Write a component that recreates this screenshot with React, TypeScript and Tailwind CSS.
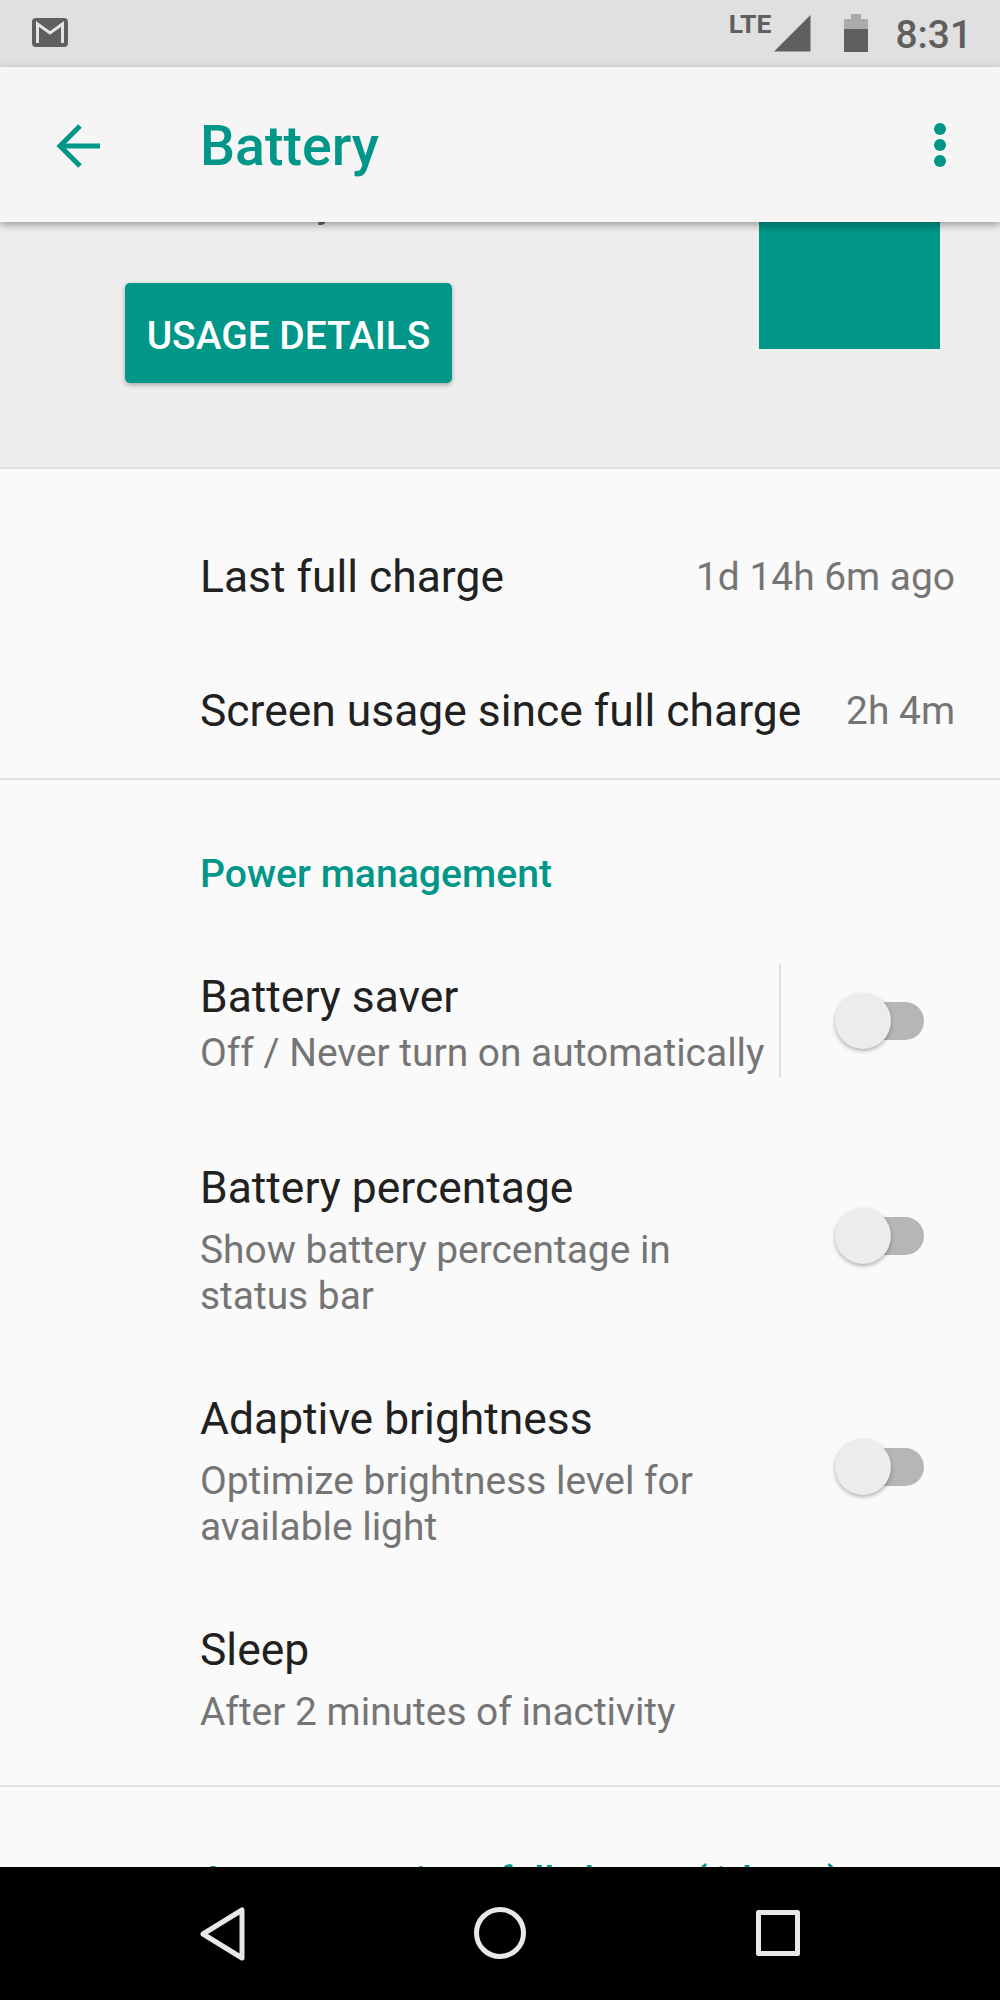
import React from "react";

function T({ className = "", children }: { className?: string; children: React.ReactNode }) {
  return <span className={`block whitespace-nowrap ${className}`}>{children}</span>;
}

function Switch({ className = "" }: { className?: string }) {
  return (
    <div className={`relative h-[56px] w-[89px] shrink-0 ${className}`}>
      <div className="absolute right-0 top-[9px] h-[38px] w-[80px] rounded-full bg-[#b6b6b6]" />
      <div className="absolute left-0 top-0 h-[56px] w-[56px] rounded-full bg-[#ececec] shadow-[0_2px_4px_rgba(0,0,0,0.3)]" />
    </div>
  );
}

function Pref({ title, lines, toggle = true, bottom = "pb-[35px]" }: { title: string; lines: string[]; toggle?: boolean; bottom?: string }) {
  return (
    <div className={`flex items-center pl-[200px] pr-[76px] pt-[35px] ${bottom}`}>
      <div className="flex-1">
        <T className="text-[44.4px] leading-[60px] text-[#212121]">{title}</T>
        <div className="mt-[9px]">
          {lines.map((l) => (
            <T key={l} className="text-[38.9px] leading-[46px] text-[#757575]">{l}</T>
          ))}
        </div>
      </div>
      {toggle && <Switch className="mt-[-5px]" />}
    </div>
  );
}

export default function App() {
  return (
    <div className="flex h-[2000px] w-[1000px] flex-col overflow-hidden bg-[#fafafa] font-['Roboto',sans-serif]">
      {/* status bar */}
      <div className="flex h-[67px] shrink-0 items-center bg-[#e0e0e0] pl-[32px] pr-[28px]">
        <svg width="36" height="30" viewBox="0 0 36 30" className="mt-[-2px]">
          <rect x="0" y="0" width="36" height="29" rx="4" fill="#5f5f5f" />
          <path d="M5.5 25V6L18 15L30.5 6V25" fill="none" stroke="#e4e4e4" strokeWidth="3" />
        </svg>
        <div className="flex-1" />
        <span className="mt-[-20px] text-[26.5px] font-bold leading-[24px] text-[#5f5f5f]">LTE</span>
        <svg width="37" height="37" viewBox="0 0 37 37" className="ml-[3px] mt-[-1px]">
          <path d="M36.5 0V36.5H0Z" fill="#5f5f5f" />
        </svg>
        <svg width="24" height="38" viewBox="0 0 24 38" className="ml-[33px] mt-[-1px]">
          <path d="M0 5H7V0H17V5H24V15H0Z" fill="#ababab" />
          <rect x="0" y="15" width="24" height="23" fill="#5f5f5f" />
        </svg>
        <T className="ml-[27px] mt-[2px] text-[38.9px] font-medium leading-[40px] text-[#5f5f5f]">8:31</T>
      </div>

      {/* app bar */}
      <div className="relative z-10 flex h-[155px] shrink-0 items-center bg-[#f5f5f5] pl-[56px] pr-[53px] shadow-[0_3px_8px_rgba(0,0,0,0.35)]">
        <svg width="44" height="44" viewBox="0 0 44 44" fill="none" stroke="#009688" strokeWidth="5" className="mt-[2px]">
          <path d="M44 22H4" />
          <path d="M24 2L4 22L24 42" />
        </svg>
        <T className="ml-[100px] mt-[5px] flex-1 text-[55.5px] font-medium leading-[64px] text-[#009688]">Battery</T>
        <svg width="14" height="44" viewBox="0 0 14 44" fill="#009688">
          <ellipse cx="7" cy="6" rx="6" ry="6" />
          <ellipse cx="7" cy="22" rx="6" ry="6" />
          <ellipse cx="7" cy="38" rx="6" ry="6" />
        </svg>
      </div>

      {/* scroll content */}
      <div className="min-h-0 flex-1 overflow-hidden">
        <div className="mt-[-40px] flex h-[287px] border-b-2 border-[#e0e0e0] bg-[#eeeeee] pr-[60px]">
          <div className="flex-1 pl-[157px] pt-[2px]">
            <T className="h-[40px] text-[38.9px] leading-[40px] text-[#616161]">Just 1 day left</T>
            <div className="ml-[-32px] mt-[59px] flex h-[100px] w-[327px] items-center justify-center rounded-[5px] bg-[#009688] shadow-[0_2px_5px_rgba(0,0,0,0.3)]">
              <T className="mt-[5px] text-[38.9px] font-medium leading-[46px] text-white">USAGE DETAILS</T>
            </div>
          </div>
          <div className="h-[167px] w-[181px] bg-[#009688]" />
        </div>

        <div className="border-b-2 border-[#e0e0e0] pl-[200px] pr-[45px] pt-[41px]">
          <div className="flex h-[133px] items-center justify-between">
            <T className="text-[44.4px] leading-[60px] text-[#212121]">Last full charge</T>
            <T className="text-[38.9px] leading-[46px] text-[#757575]">1d 14h 6m ago</T>
          </div>
          <div className="flex h-[135px] items-center justify-between pt-[1px]">
            <T className="text-[44.4px] leading-[60px] text-[#212121]">Screen usage since full charge</T>
            <T className="text-[38.9px] leading-[46px] text-[#757575]">2h 4m</T>
          </div>
        </div>

        <div className="border-b-2 border-[#e0e0e0]">
          <div className="pl-[200px] pt-[69px]">
            <T className="text-[39.2px] font-medium leading-[50px] text-[#009688]">Power management</T>
          </div>
          <div className="mb-[46px] mt-[65px] flex h-[113px] items-center pl-[200px] pr-[76px]">
            <div className="mt-[2px] flex-1">
              <T className="text-[44.4px] leading-[60px] text-[#212121]">Battery saver</T>
              <T className="mt-[3px] text-[38.9px] leading-[46px] text-[#757575]">Off / Never turn on automatically</T>
            </div>
            <div className="mr-[54px] h-[113px] w-[2px] bg-[#e0e0e0]" />
            <Switch />
          </div>
          <Pref title="Battery percentage" lines={["Show battery percentage in", "status bar"]} />
          <Pref title="Adaptive brightness" lines={["Optimize brightness level for", "available light"]} />
          <Pref title="Sleep" lines={["After 2 minutes of inactivity"]} toggle={false} bottom="pb-[50px]" />
        </div>

        <div className="pl-[200px] pt-[69px]">
          <T className="text-[39.2px] font-medium leading-[50px] text-[#009688]">App usage since full charge (1d ago)</T>
        </div>
      </div>

      {/* nav bar */}
      <div className="relative z-10 flex h-[133px] shrink-0 items-start bg-black pt-[40px]">
        <svg width="46" height="54" viewBox="0 0 46 54" fill="none" stroke="#e8e8e8" strokeWidth="5" strokeLinejoin="round" className="ml-[200px]">
          <path d="M42 3V51L3 27Z" />
        </svg>
        <svg width="52" height="52" viewBox="0 0 52 52" fill="none" stroke="#e8e8e8" strokeWidth="5" className="ml-[228px]">
          <circle cx="26" cy="26" r="23.5" />
        </svg>
        <svg width="44" height="46" viewBox="0 0 44 46" fill="none" stroke="#e8e8e8" strokeWidth="5" strokeLinejoin="round" className="ml-[230px] mt-[3px]">
          <rect x="2.5" y="2.5" width="39" height="41" />
        </svg>
      </div>
    </div>
  );
}
